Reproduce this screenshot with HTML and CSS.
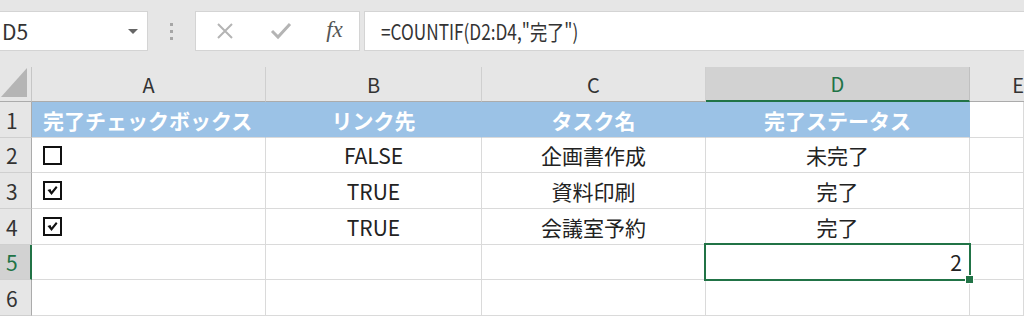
FILE: index.html
```html
<!DOCTYPE html>
<html lang="ja">

<head>
    <meta charset="UTF-8">
    <title>COUNTIF 完了</title>
    <link rel="stylesheet" href="styles.css">
</head>

<body>

    <div class="formula-bar">
        <div class="name-box">
            <span>D5</span>
            <span class="caret"></span>
        </div>
        <div class="grip"><i></i><i></i><i></i></div>
        <div class="fx-buttons">
            <svg class="icon" width="18" height="18" viewBox="0 0 18 18">
                <path d="M2 2 L16 16 M16 2 L2 16" stroke="#b4b4b4" stroke-width="2" fill="none" />
            </svg>
            <svg class="icon" width="22" height="18" viewBox="0 0 22 18">
                <path d="M2 9 L8 15 L20 2" stroke="#b4b4b4" stroke-width="3" fill="none" />
            </svg>
            <span class="fx">fx</span>
        </div>
        <div class="formula-input">
            <span class="formula-text">=COUNTIF(D2:D4,"完了")</span>
        </div>
    </div>

    <div class="sheet">
        <!-- column headers -->
        <div class="corner">
            <svg width="26" height="29" viewBox="0 0 26 29">
                <polygon points="26,0 26,29 0,29" fill="#b5b5b5" />
            </svg>
        </div>
        <div class="col-head">A</div>
        <div class="col-head">B</div>
        <div class="col-head">C</div>
        <div class="col-head active">D</div>
        <div class="col-head col-e">E</div>

        <!-- row 1 -->
        <div class="row-head">1</div>
        <div class="cell title left">完了チェックボックス</div>
        <div class="cell title">リンク先</div>
        <div class="cell title">タスク名</div>
        <div class="cell title">完了ステータス</div>
        <div class="cell"></div>

        <!-- row 2 -->
        <div class="row-head">2</div>
        <div class="cell left">
            <svg class="check" width="19" height="19" viewBox="0 0 19 19">
                <rect x="1" y="1" width="17" height="17" stroke="#111" stroke-width="2" fill="#fff" />
            </svg>
        </div>
        <div class="cell">FALSE</div>
        <div class="cell">企画書作成</div>
        <div class="cell">未完了</div>
        <div class="cell"></div>

        <!-- row 3 -->
        <div class="row-head">3</div>
        <div class="cell left">
            <svg class="check" width="19" height="19" viewBox="0 0 19 19">
                <rect x="1" y="1" width="17" height="17" stroke="#111" stroke-width="2" fill="#fff" />
                <path d="M4.5 9 L7.5 8 L8.5 10.5 L13 5 L14.5 6.5 L8.5 14 Z" fill="#111" />
            </svg>
        </div>
        <div class="cell">TRUE</div>
        <div class="cell">資料印刷</div>
        <div class="cell">完了</div>
        <div class="cell"></div>

        <!-- row 4 -->
        <div class="row-head">4</div>
        <div class="cell left">
            <svg class="check" width="19" height="19" viewBox="0 0 19 19">
                <rect x="1" y="1" width="17" height="17" stroke="#111" stroke-width="2" fill="#fff" />
                <path d="M4.5 9 L7.5 8 L8.5 10.5 L13 5 L14.5 6.5 L8.5 14 Z" fill="#111" />
            </svg>
        </div>
        <div class="cell">TRUE</div>
        <div class="cell">会議室予約</div>
        <div class="cell">完了</div>
        <div class="cell"></div>

        <!-- row 5 -->
        <div class="row-head active">5</div>
        <div class="cell"></div>
        <div class="cell"></div>
        <div class="cell"></div>
        <div class="cell right selected">2</div>
        <div class="cell"></div>

        <!-- row 6 -->
        <div class="row-head">6</div>
        <div class="cell"></div>
        <div class="cell"></div>
        <div class="cell"></div>
        <div class="cell"></div>
        <div class="cell"></div>
    </div>

</body>

</html>
```

FILE: styles.css
```css
body {
    margin: 0;
    padding: 0;
    width: 1024px;
    height: 326px;
    overflow: hidden;
    background-color: #e6e6e6;
    font-family: "Noto Sans CJK JP", "Noto Sans", sans-serif;
    color: #222;
}

/* formula bar */

.formula-bar {
    display: flex;
    height: 40px;
    padding-top: 11px;
    margin-bottom: 16px;
}

.name-box {
    width: 148px;
    display: flex;
    align-items: center;
    justify-content: space-between;
    background-color: #fff;
    border: 1px solid #d4d4d4;
    border-left: none;
    box-sizing: border-box;
    font-size: 21px;
    color: #333;
    padding: 0 9px 0 2px;
}

.caret {
    width: 0;
    height: 0;
    border-left: 5px solid transparent;
    border-right: 5px solid transparent;
    border-top: 5px solid #666;
}

.grip {
    width: 47px;
    display: flex;
    flex-direction: column;
    align-items: center;
    justify-content: center;
    gap: 4px;
}

.grip i {
    width: 3px;
    height: 3px;
    background-color: #a6a6a6;
}

.fx-buttons {
    width: 165px;
    display: grid;
    grid-template-columns: 58px 54px 53px;
    align-items: center;
    justify-items: center;
    background-color: #fff;
    border: 1px solid #d4d4d4;
    box-sizing: border-box;
}

.fx {
    font-family: "Liberation Serif", serif;
    font-style: italic;
    font-size: 23px;
    color: #555;
    margin-top: -3px;
}

.formula-input {
    flex: 1;
    margin-left: 4px;
    display: flex;
    align-items: center;
    background-color: #fff;
    border: 1px solid #d4d4d4;
    border-right: none;
    box-sizing: border-box;
    padding-left: 16px;
}

.formula-text {
    display: inline-block;
    font-size: 21px;
    color: #333;
    transform: scaleX(0.82);
    transform-origin: left center;
    white-space: nowrap;
}

/* sheet grid */

.sheet {
    display: grid;
    grid-template-columns: 32px 234px 216px 224px 264px 54px;
    grid-template-rows: 35px 36px 35px 36px 36px 35px 36px 11px;
    background-color: #fff;
    overflow: hidden;
}

.corner,
.col-head,
.row-head,
.cell {
    box-sizing: border-box;
    display: flex;
    align-items: center;
    justify-content: center;
    white-space: nowrap;
}

.corner {
    background-color: #e6e6e6;
    border-right: 1px solid #c6c6c6;
    border-bottom: 1px solid #ababab;
    align-items: flex-end;
    justify-content: flex-end;
    padding: 0 4px 4px 0;
}

.col-head {
    background-color: #e6e6e6;
    border-right: 1px solid #cfcfcf;
    border-bottom: 1px solid #ababab;
    font-size: 20px;
    color: #333;
}

.col-head.active {
    background-color: #d2d2d2;
    color: #217346;
    border-bottom: 2px solid #217346;
    border-right-color: #c0c0c0;
}

.col-e {
    justify-content: flex-end;
    padding-right: 0;
    border-right: none;
}

.row-head {
    background-color: #e6e6e6;
    border-right: 1px solid #ababab;
    border-bottom: 1px solid #cfcfcf;
    font-size: 21px;
    color: #333;
    justify-content: flex-start;
    padding-left: 6px;
}

.row-head.active {
    background-color: #d2d2d2;
    color: #217346;
    border-right: 2px solid #217346;
}

.cell {
    border-right: 1px solid #dadada;
    border-bottom: 1px solid #dadada;
    font-size: 21px;
    color: #222;
}

.cell.left {
    justify-content: flex-start;
    padding-left: 11px;
}

.cell.right {
    justify-content: flex-end;
    padding-right: 7px;
}

.cell.title {
    background-color: #9bc2e6;
    border-right-color: #9bc2e6;
    color: #fff;
    font-weight: bold;
}

.selected {
    position: relative;
}

.selected::before {
    content: "";
    position: absolute;
    left: -2px;
    top: -2px;
    right: -2px;
    bottom: -2px;
    border: 2px solid #217346;
}

.selected::after {
    content: "";
    position: absolute;
    right: -5px;
    bottom: -5px;
    width: 7px;
    height: 7px;
    background-color: #217346;
    border: 1px solid #fff;
}
```
